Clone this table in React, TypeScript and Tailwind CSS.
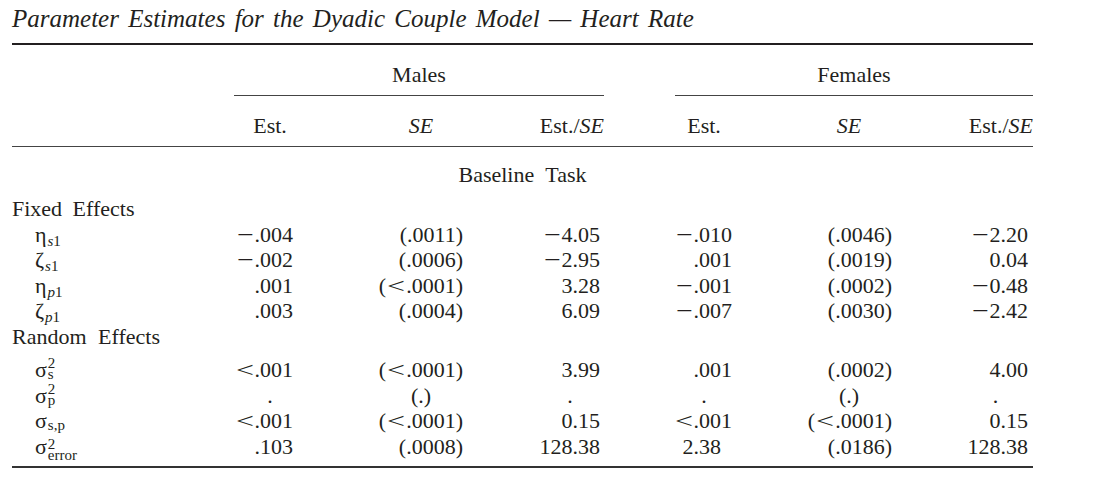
import type { ReactNode } from 'react';

const GRID = 'grid grid-cols-[222px_72px_230px_68px_64px_72px_218px_75px]';

// right padding per value column (Males Est, SE, Est/SE, Females Est, SE, Est/SE)
const PAD = ['pr-[13px]', 'pr-[73px]', 'pr-[4px]', 'pr-[8px]', 'pr-[66px]', 'pr-[5px]'];
const PAD_SHORT = ['pr-[13px]', 'pr-[73px]', 'pr-[4px]', 'pr-[19px]', 'pr-[66px]', 'pr-[5px]'];
const COL_START = ['col-start-2', 'col-start-3', 'col-start-4', 'col-start-6', 'col-start-7', 'col-start-8'];

function Num({ v }: { v: string }) {
  // the typeset original uses wider math glyphs for < and the minus sign
  return (
    <>
      {v.split(/([<−])/).map((p, i) =>
        p === '<' ? (
          <span key={i} className="inline-block w-[20px] text-center scale-x-[1.45]">
            &lt;
          </span>
        ) : p === '−' ? (
          <span key={i} className="inline-block w-[17px] mr-[1px] text-center scale-x-[1.35]">
            −
          </span>
        ) : (
          <span key={i}>{p}</span>
        ),
      )}
    </>
  );
}

function Sub({ base, sub }: { base: string; sub: string }) {
  return (
    <span className="pl-[23px]">
      {base}
      <span className="relative top-[4px] text-[15px] leading-none ml-[1px]">
        <i>{sub[0]}</i>
        {sub.slice(1)}
      </span>
    </span>
  );
}

function Sigma({ sup, sub, low }: { sup?: string; sub: string; low?: boolean }) {
  return (
    <span className="pl-[23px]">
      σ
      {sup ? (
        <span
          className={`relative inline-flex flex-col text-[15px] leading-[11px] ml-[1px] ${
            low ? 'top-[-5px]' : 'top-[-9px]'
          }`}
        >
          <span>{sup}</span>
          <span>{sub}</span>
        </span>
      ) : (
        <span className="relative top-[2px] text-[15px] leading-none ml-[1px]">{sub}</span>
      )}
    </span>
  );
}

type Row = { label: ReactNode; values: string[] };

const fixedRows: Row[] = [
  { label: <Sub base="η" sub="s1" />, values: ['−.004', '(.0011)', '−4.05', '−.010', '(.0046)', '−2.20'] },
  { label: <Sub base="ζ" sub="s1" />, values: ['−.002', '(.0006)', '−2.95', '.001', '(.0019)', '0.04'] },
  { label: <Sub base="η" sub="p1" />, values: ['.001', '(<.0001)', '3.28', '−.001', '(.0002)', '−0.48'] },
  { label: <Sub base="ζ" sub="p1" />, values: ['.003', '(.0004)', '6.09', '−.007', '(.0030)', '−2.42'] },
];

const randomRows: Row[] = [
  { label: <Sigma sup="2" sub="s" />, values: ['<.001', '(<.0001)', '3.99', '.001', '(.0002)', '4.00'] },
  { label: <Sigma sup="2" sub="p" />, values: ['.', '(.)', '.', '.', '(.)', '.'] },
  { label: <Sigma sub="s,p" />, values: ['<.001', '(<.0001)', '0.15', '<.001', '(<.0001)', '0.15'] },
  { label: <Sigma sup="2" sub="error" low />, values: ['.103', '(.0008)', '128.38', '2.38', '(.0186)', '128.38'] },
];

function DataRow({ row }: { row: Row }) {
  return (
    <div className={`${GRID} h-[25.5px] leading-[25.5px] whitespace-nowrap`}>
      <div className="col-start-1">{row.label}</div>
      {row.values.map((v, i) => {
        const lone = v === '.' || v === '(.)';
        const short = i === 3 && /^\d\.\d\d$/.test(v);
        return (
          <div
            key={i}
            className={`${COL_START[i]} ${lone ? 'text-center' : `text-right ${short ? PAD_SHORT[i] : PAD[i]}`}`}
          >
            <Num v={v} />
          </div>
        );
      })}
    </div>
  );
}

export default function App() {
  return (
    <div className="min-h-screen bg-white text-[#231f20] font-['Liberation_Serif','Times_New_Roman',serif] text-[22px]">
      <div className="w-[1021px] ml-[12px]">
        <div className="h-[43px] pt-[4px] text-[25px] leading-[30px] italic whitespace-nowrap [word-spacing:3px]">
          Parameter Estimates for the Dyadic Couple Model — Heart Rate
        </div>
        <div className="h-[2px] bg-[#231f20]" />

        <div className={GRID}>
          <div className="col-start-2 col-span-3 pt-[17px] pb-[8px] leading-[25px] text-center border-b border-[#444]">
            Males
          </div>
          <div className="col-start-6 col-span-3 ml-[7px] pt-[17px] pb-[8px] leading-[25px] text-center border-b border-[#444]">
            Females
          </div>
        </div>

        <div className={`${GRID} pt-[17px] pb-[8px] leading-[25px] border-b border-[#444]`}>
          <div className="col-start-2 text-center">Est.</div>
          <div className="col-start-3 text-center italic">SE</div>
          <div className="col-start-4 text-right whitespace-nowrap">
            Est./<i>SE</i>
          </div>
          <div className="col-start-6 text-center">Est.</div>
          <div className="col-start-7 text-center italic">SE</div>
          <div className="col-start-8 text-right whitespace-nowrap">
            Est./<i>SE</i>
          </div>
        </div>

        <div className="pt-[14.5px] leading-[25.5px] text-center [word-spacing:6px]">Baseline Task</div>

        <div className="mt-[9px] h-[25.5px] leading-[25.5px] [word-spacing:5px]">Fixed Effects</div>
        {fixedRows.map((r, i) => (
          <DataRow key={i} row={r} />
        ))}

        <div className="h-[25.5px] leading-[25.5px] [word-spacing:6px]">Random Effects</div>
        <div className="mt-[8px]">
          {randomRows.map((r, i) => (
            <DataRow key={i} row={r} />
          ))}
        </div>

        <div className="mt-[7px] h-[2px] bg-[#333]" />
      </div>
    </div>
  );
}
